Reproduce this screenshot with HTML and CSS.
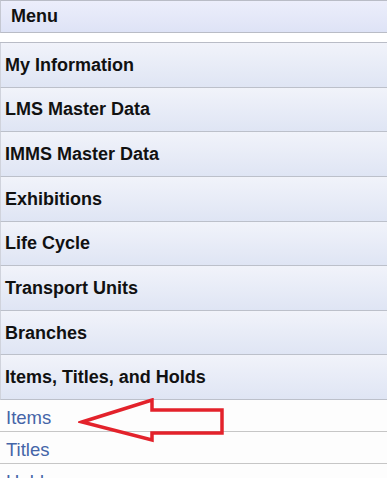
FILE: index.html
```html
<!DOCTYPE html>
<html>
<head>
<meta charset="utf-8">
<link rel="stylesheet" href="styles.css">
</head>
<body>
<div class="page">
  <div class="menu-header">Menu</div>
  <ul class="menu">
    <li class="menu-row">My Information</li>
    <li class="menu-row">LMS Master Data</li>
    <li class="menu-row">IMMS Master Data</li>
    <li class="menu-row">Exhibitions</li>
    <li class="menu-row">Life Cycle</li>
    <li class="menu-row">Transport Units</li>
    <li class="menu-row">Branches</li>
    <li class="menu-row">Items, Titles, and Holds</li>
  </ul>
  <ul class="submenu">
    <li class="sub-row"><a href="#">Items</a></li>
    <li class="sub-row"><a href="#">Titles</a></li>
    <li class="sub-row"><a href="#">Holds</a></li>
  </ul>
  <svg class="arrow" width="160" height="60" viewBox="0 0 160 60">
    <polygon points="4,24 74,2 74,12 144,12 144,35 74,35 74,42" fill="none" stroke="#e3222b" stroke-width="3.5" stroke-linejoin="miter"/>
  </svg>
</div>
</body>
</html>
```
FILE: styles.css
```css
html, body {
  margin: 0;
  padding: 0;
  background: #ffffff;
}
.page {
  position: relative;
  width: 387px;
  height: 478px;
  overflow: hidden;
  font-family: "Liberation Sans", Arial, sans-serif;
}
.menu-header {
  box-sizing: border-box;
  height: 33px;
  border-top: 1px solid #b9bcc6;
  border-bottom: 1px solid #b9bcc6;
  border-left: 1px solid #c5c8d2;
  background: linear-gradient(#eceefb, #dee3f6);
  font-weight: bold;
  font-size: 18px;
  color: #111;
  padding-left: 10px;
  display: flex;
  align-items: center;
}
.menu {
  list-style: none;
  margin: 9px 0 0 0;
  padding: 0;
  border-top: 1px solid #b9bcc6;
}
.menu-row {
  box-sizing: border-box;
  height: 44.625px;
  border-bottom: 1px solid #bcc0ca;
  border-left: 1px solid #d0d3dc;
  background: linear-gradient(#f1f3fa, #dfe5f4);
  font-weight: bold;
  font-size: 18px;
  color: #111;
  padding-left: 4px;
  padding-top: 1px;
  display: flex;
  align-items: center;
}
.submenu {
  list-style: none;
  margin: 0;
  padding: 0;
}
.sub-row {
  box-sizing: border-box;
  height: 32px;
  border-bottom: 1px solid #c6c6c6;
  padding-left: 6px;
  padding-top: 4px;
  display: flex;
  align-items: center;
  font-size: 18.5px;
  background: #fdfdfd;
}
.sub-row a {
  color: #4565a8;
  text-decoration: none;
}
.arrow {
  position: absolute;
  left: 78px;
  top: 398px;
}
```
